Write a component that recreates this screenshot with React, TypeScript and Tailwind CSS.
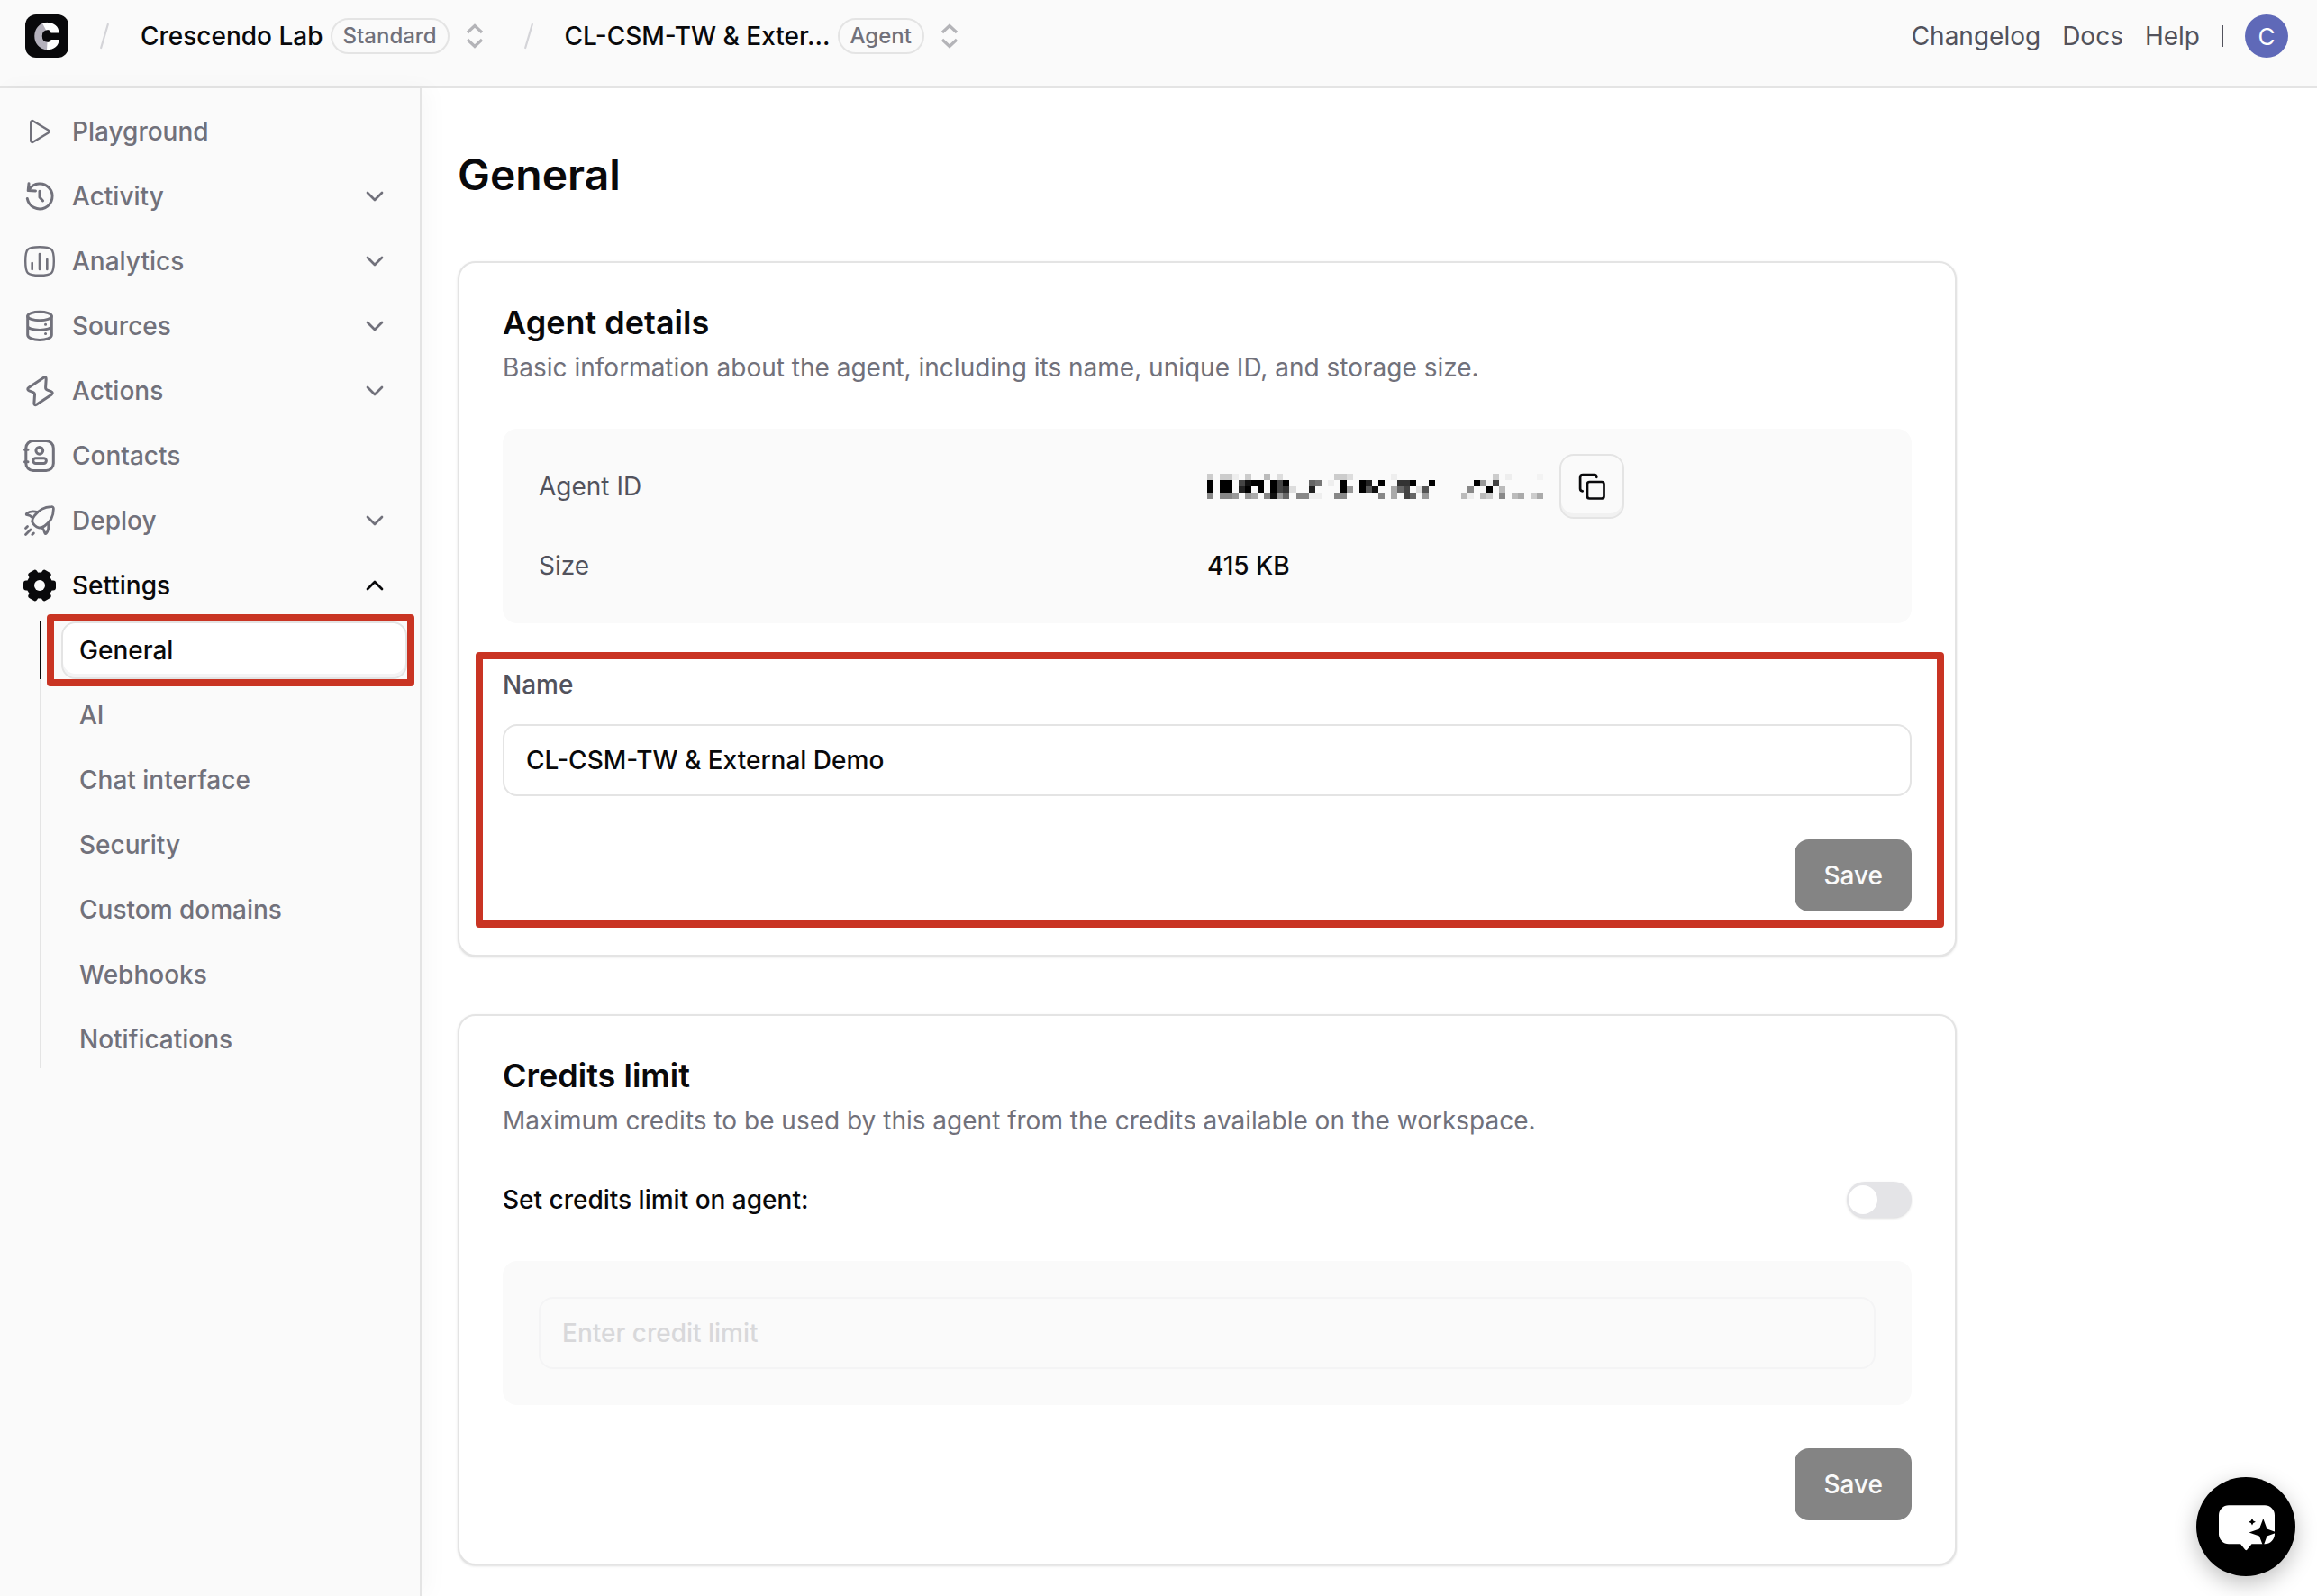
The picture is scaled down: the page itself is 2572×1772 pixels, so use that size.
import { useState, type ReactNode } from "react";
import clsx from "clsx";

const icons: Record<string, ReactNode> = {
  playground: (
    <path
      strokeWidth="2.4"
      d="M8.2 8c0-1.6 1.5-2.4 2.8-1.6l16.6 10.2c1.1.7 1.1 2.1 0 2.8L11 29.6c-1.3.8-2.8 0-2.8-1.6z"
    />
  ),
  activity: (
    <>
      <path d="M4.3 20.5A14 14 0 1 0 6.4 10.2" />
      <path d="M6 3.8 5.2 11.6l8.3.4M18 12.3V19l3.6 4" />
    </>
  ),
  analytics: (
    <>
      <path
        strokeWidth="2.4"
        d="M18 2.2c13.8 0 15.8 2 15.8 15.8S31.8 33.8 18 33.8 2.2 31.8 2.2 18 4.2 2.2 18 2.2z"
      />
      <path strokeWidth="2.6" d="M9.7 20v7M18 10v17M26.3 16v11" />
    </>
  ),
  sources: (
    <>
      <ellipse cx="18" cy="7" rx="13.3" ry="4.8" />
      <path d="M4.7 7v21c0 3 6 5.4 13.3 5.4S31.3 31 31.3 28V7M4.7 18c0 2.6 6 4.4 13.3 4.4S31.3 20.6 31.3 18" />
      <path d="M24.5 16.3h.1M24.5 26.5h.1" />
    </>
  ),
  actions: (
    <path d="M22.5 3.2 6 14.2c-1.8 1.2-1.6 3 .3 3.7l4 1.4c1.5.5 2.3 1.5 2.2 3l-.6 9.4c-.1 1.9 1 2.6 2.6 1.6l16.6-11.1c1.7-1.2 1.5-2.9-.4-3.6l-4-1.4c-1.5-.5-2.2-1.5-2.1-3l.6-9.4c.1-1.9-1.1-2.7-2.7-1.6z" />
  ),
  contacts: (
    <>
      <rect x="2.8" y="1.5" width="30.5" height="33" rx="8" />
      <path d="M1.5 11.3H5M1.5 24.7H5" />
      <circle cx="17.8" cy="12.3" r="3.9" />
      <rect x="10.8" y="20.8" width="14.6" height="5.6" rx="2.8" />
    </>
  ),
  deploy: (
    <>
      <path
        strokeWidth="2.8"
        d="M31 2.6c1.6-.1 2.4.7 2.4 2.4-.1 8-3.4 14.7-9.9 19-2 1.4-4.6 2.2-6.5 1.9-3-.6-6.7-3.9-7.4-7 0-1.9 1-4.3 2.6-6.3C17 6 23.5 2.9 31 2.6z"
      />
      <path
        strokeWidth="2.8"
        d="M15.8 8.6c-5.2-1.2-9.6-.6-12.2 1.7-.7.7-.4 1.3.5 1.4 2.7.2 4.3 1.3 6 3M27.4 20.8c.9 4.6 0 9-2 11.4-.6.7-1.3.5-1.6-.4-.7-2.6-1.3-4.4-3.4-6.2"
      />
      <path strokeWidth="2.8" d="m2.5 26.5 2-2M2.5 33.5l5.5-5.5M9.8 33.6l1.6-1.6" />
    </>
  ),
  settings: (
    <g fill="currentColor" stroke="none">
      <rect x="0" y="12.5" width="36" height="11" rx="3" />
      <rect x="0" y="12.5" width="36" height="11" rx="3" transform="rotate(60 18 18)" />
      <rect x="0" y="12.5" width="36" height="11" rx="3" transform="rotate(120 18 18)" />
      <circle cx="18" cy="18" r="14.5" />
      <circle cx="18" cy="18" r="6" fill="#fafafa" />
    </g>
  ),
};

const navItems = [
  { id: "playground", label: "Playground", expandable: false },
  { id: "activity", label: "Activity", expandable: true },
  { id: "analytics", label: "Analytics", expandable: true },
  { id: "sources", label: "Sources", expandable: true },
  { id: "actions", label: "Actions", expandable: true },
  { id: "contacts", label: "Contacts", expandable: false },
  { id: "deploy", label: "Deploy", expandable: true },
  { id: "settings", label: "Settings", expandable: true },
];

const settingsItems = [
  "General",
  "AI",
  "Chat interface",
  "Security",
  "Custom domains",
  "Webhooks",
  "Notifications",
];

// Each entry is a column followed by one hex digit of grey
const maskedRows = [
  "0c 2c 3c 4e 6c 9b 11d 20c 21c 22d 29e 45c 47e 52f",
  "00 20 30 54 61 70 80 100 114 120 166 177 19e 210 240 252 270 303 313 320 350 420 439 44f 454",
  "00 20 30 52 60 80 100 114 123 13d 162 210 229 240 255 261 29a 306 314 33d 345 418 440 46b",
  "08 28 38 49 69 7a 98 101 119 126 148 158 16e 17e 208 218 278 29a 314 326 349 40b 41e 43b 44c 468 48b 49a 51c 52a",
];

function Icon({ id }: { id: string }) {
  return (
    <svg
      viewBox="0 0 36 36"
      className="size-9 shrink-0"
      fill="none"
      stroke="currentColor"
      strokeWidth="3"
      strokeLinecap="round"
      strokeLinejoin="round"
      aria-hidden="true"
    >
      {icons[id]}
    </svg>
  );
}

function Logo() {
  return (
    <svg viewBox="0 0 48 48" className="size-12" fill="none" aria-hidden="true">
      <rect width="48" height="48" rx="12" fill="#09090b" />
      <path d="M25 13C11 13 11 35 25 35" stroke="#b4b1bc" strokeWidth="8.5" />
      <path d="M19 9.8C28 7 37.5 11 37.5 20.5H28.5C28 17.5 25.5 16.5 23 17.3z" fill="#fff" />
      <path d="M24 39.2C31 39.5 37.5 35.5 37.5 28H28.5C28 30.3 26.5 31 24.5 31z" fill="#fff" />
    </svg>
  );
}

function Slash() {
  return (
    <svg viewBox="0 0 10 30" className="h-[30px] w-2.5" fill="none" aria-hidden="true">
      <path d="M8.8 2 1.2 28" stroke="#d4d4d8" strokeWidth="2.2" strokeLinecap="round" />
    </svg>
  );
}

function Crumb({ name, kind }: { name: string; kind: string }) {
  return (
    <div className="flex items-center gap-1.5 pr-2.5">
      <span className="text-[28px] leading-10 font-medium">{name}</span>
      <span className="ml-0.5 flex h-10 items-center rounded-full border-2 border-[#e4e4e4] px-3 text-2xl font-medium text-zinc-500">
        {kind}
      </span>
      <button type="button" aria-label={`Switch ${name}`} className="ml-3">
        <svg viewBox="0 0 20 28" className="h-7 w-5" fill="none" aria-hidden="true">
          <path
            d="m2 10 8-7.5 8 7.5M2 18l8 7.5 8-7.5"
            stroke="#b4b4b8"
            strokeWidth="3.2"
          />
        </svg>
      </button>
    </div>
  );
}

function MaskedId() {
  return (
    <svg
      viewBox="0 0 53 4"
      className="h-7 w-[373px]"
      preserveAspectRatio="none"
      shapeRendering="crispEdges"
      role="img"
      aria-label="Hidden agent ID"
    >
      {maskedRows.map((row, y) =>
        row.split(" ").map((cell) => {
          const shade = cell.slice(-1);
          return (
            <rect
              key={cell}
              x={Number(cell.slice(0, -1))}
              y={y}
              width="1"
              height="1"
              fill={shade === "f" ? "#f3f3f3" : `#${shade}${shade}${shade}`}
            />
          );
        }),
      )}
    </svg>
  );
}

function Card({
  title,
  description,
  children,
}: {
  title: string;
  description: string;
  children: ReactNode;
}) {
  return (
    <section className="rounded-[20px] border-2 border-[#e4e4e4] bg-white p-12 shadow-sm">
      <h2 className="text-4xl leading-9 font-semibold">{title}</h2>
      <p className="mt-3 text-[28px] leading-10 text-zinc-500">{description}</p>
      {children}
    </section>
  );
}

function SaveButton() {
  return (
    <div className="mt-12 flex justify-end">
      <button
        type="submit"
        className="h-20 rounded-2xl bg-[#848484] px-8 text-[28px] font-medium text-zinc-50"
      >
        Save
      </button>
    </div>
  );
}

function Sidebar() {
  return (
    <nav className="w-[468px] shrink-0 border-r-2 border-[#e4e4e4] bg-[#fafafa] pt-4 text-[28px] font-medium text-zinc-500 shadow-[8px_0_24px_rgba(0,0,0,0.03)]">
      <ul className="flex flex-col gap-2">
        {navItems.map((item) => (
          <li key={item.id}>
            <button
              type="button"
              className={clsx(
                "flex h-16 w-full items-center gap-[18px] pr-10 pl-[26px]",
                item.id === "settings" && "text-zinc-950",
              )}
            >
              <Icon id={item.id} />
              {item.label}
              {item.expandable && (
                <svg
                  viewBox="0 0 20 20"
                  className={clsx("ml-auto size-5", item.id === "settings" && "rotate-180")}
                  fill="none"
                  stroke="currentColor"
                  strokeWidth="2.7"
                  strokeLinecap="round"
                  strokeLinejoin="round"
                  aria-hidden="true"
                >
                  <path d="m2 6 8 8 8-8" />
                </svg>
              )}
            </button>
          </li>
        ))}
      </ul>
      <ul className="mt-2 mr-3.5 ml-11 flex flex-col gap-2 border-l-2 border-[#e4e4e4] pl-[22px]">
        {settingsItems.map((label) => {
          const active = label === "General";
          return (
            <li key={label} className="relative">
              {active && <span className="absolute top-0 -left-6 h-full w-0.5 bg-zinc-950" />}
              <a
                href="#"
                className={clsx(
                  "flex h-16 items-center rounded-2xl border-2 px-[18px]",
                  active
                    ? "border-[#e4e4e4] bg-white text-zinc-950 shadow-[inset_0_-4px_0_#f4f4f5]"
                    : "border-transparent",
                )}
              >
                {label}
              </a>
              {active && (
                <span className="pointer-events-none absolute -top-2 -right-2 -bottom-2 -left-4 rounded-sm border-8 border-[#c93423]" />
              )}
            </li>
          );
        })}
      </ul>
    </nav>
  );
}

export default function App() {
  const [name, setName] = useState("CL-CSM-TW & External Demo");
  const [limited, setLimited] = useState(false);

  return (
    <div className="flex min-h-screen flex-col bg-white font-['Inter',sans-serif] text-zinc-950">
      <header className="flex h-[98px] items-start justify-between border-b-2 border-[#e4e4e4] bg-[#fafafa] pt-4 pr-8 pl-7">
        <div className="flex h-12 items-center gap-[35px]">
          <Logo />
          <Slash />
          <Crumb name="Crescendo Lab" kind="Standard" />
          <Slash />
          <Crumb name="CL-CSM-TW & Exter..." kind="Agent" />
        </div>
        <div className="flex h-12 items-center gap-6 text-[28px] text-zinc-600">
          <a href="#">Changelog</a>
          <a href="#">Docs</a>
          <a href="#">Help</a>
          <span className="h-6 w-0.5 bg-zinc-600" />
          <button
            type="button"
            aria-label="Account"
            className="flex size-12 items-center justify-center rounded-full bg-[#5f69b8] text-[26px] text-white"
          >
            C
          </button>
        </div>
      </header>

      <div className="flex flex-1">
        <Sidebar />
        <main className="flex-1 px-10 pt-[68px] pb-8">
          <div className="max-w-[1664px]">
            <h1 className="text-5xl leading-[56px] font-semibold">General</h1>

            <div className="mt-17 flex flex-col gap-16">
              <Card
                title="Agent details"
                description="Basic information about the agent, including its name, unique ID, and storage size."
              >
                <dl className="mt-12 grid grid-cols-2 items-center gap-y-8 rounded-2xl bg-[#fafafa] px-10 pt-7 pb-11 text-[28px] leading-10">
                  <dt className="text-zinc-600">Agent ID</dt>
                  <dd className="flex items-center gap-[18px]">
                    <MaskedId />
                    <button
                      type="button"
                      aria-label="Copy agent ID"
                      className="flex size-[72px] items-center justify-center rounded-2xl border-2 border-[#e4e4e4] shadow-[inset_0_-4px_0_#f1f1f1]"
                    >
                      <svg
                        viewBox="0 0 30 30"
                        className="size-[30px]"
                        fill="none"
                        stroke="currentColor"
                        strokeWidth="2.7"
                        strokeLinecap="round"
                        strokeLinejoin="round"
                        aria-hidden="true"
                      >
                        <rect x="10" y="10" width="18.5" height="18.5" rx="2.5" />
                        <path d="M20.3 4.8c0-1.8-.9-2.7-2.7-2.7H5.2c-2.1 0-3.1 1-3.1 3.1v12.4c0 1.8.9 2.7 2.6 2.7" />
                      </svg>
                    </button>
                  </dd>
                  <dt className="text-zinc-600">Size</dt>
                  <dd className="font-medium">415 KB</dd>
                </dl>

                <form className="relative mt-12" onSubmit={(e) => e.preventDefault()}>
                  <label htmlFor="name" className="block text-[28px] leading-10 font-medium text-zinc-600">
                    Name
                  </label>
                  <input
                    id="name"
                    className="mt-6 h-20 w-full rounded-2xl border-2 border-[#e4e4e4] bg-white px-6 text-[28px] font-medium"
                    value={name}
                    onChange={(e) => setName(e.target.value)}
                  />
                  <SaveButton />
                  <span className="pointer-events-none absolute -top-4 -right-9 -bottom-[18px] -left-[30px] rounded-sm border-8 border-[#c93423]" />
                </form>
              </Card>

              <Card
                title="Credits limit"
                description="Maximum credits to be used by this agent from the credits available on the workspace."
              >
                <form onSubmit={(e) => e.preventDefault()}>
                  <div className="mt-12 flex items-center justify-between">
                    <label htmlFor="limit-toggle" className="text-[28px] leading-10 font-medium">
                      Set credits limit on agent:
                    </label>
                    <input
                      id="limit-toggle"
                      type="checkbox"
                      role="switch"
                      checked={limited}
                      onChange={(e) => setLimited(e.target.checked)}
                      className="h-10 w-[72px] appearance-none rounded-full bg-[#e4e4e7] p-1 pl-0.5 shadow-sm before:block before:size-8 before:rounded-full before:bg-white checked:bg-zinc-950 checked:before:ml-auto"
                    />
                  </div>
                  <div className="mt-12 rounded-2xl bg-[#fafafa] p-10">
                    <input
                      aria-label="Credit limit"
                      placeholder="Enter credit limit"
                      disabled={!limited}
                      className="block h-20 w-full rounded-2xl border-2 border-[#f4f4f5] px-6 text-[28px] font-medium placeholder:text-[#d8d8da]"
                    />
                  </div>
                  <SaveButton />
                </form>
              </Card>
            </div>
          </div>
        </main>
      </div>

      <button
        type="button"
        aria-label="Open chat"
        className="fixed right-6 bottom-[22px] size-[110px] rounded-full bg-black shadow-[0_8px_24px_rgba(0,0,0,0.25)]"
      >
        <svg viewBox="0 0 110 110" aria-hidden="true">
          <path
            fill="#fff"
            d="M36 31.3h40a11 11 0 0 1 11 11v21a11 11 0 0 1-11 11H61.5l-5 6.3q-1.2 1.2-2.4 0l-5-6.3H36a11 11 0 0 1-11-11v-21a11 11 0 0 1 11-11z"
          />
          <path d="M74.3 46 78.5 57.5 89.5 61.5 78.5 65.5 74.3 77 70 65.5 58.5 61.5 70 57.5zM62 45.8l1.3 2.6 2.7 1.3-2.7 1.3-1.3 2.6-1.3-2.6-2.7-1.3 2.7-1.3z" />
        </svg>
      </button>
    </div>
  );
}
